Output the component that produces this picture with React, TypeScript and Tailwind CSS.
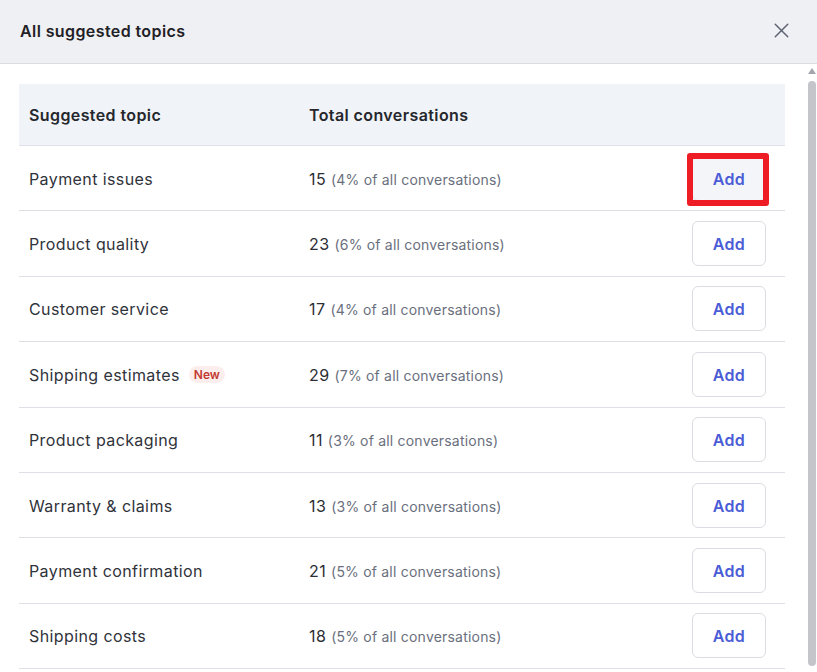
import { X } from 'lucide-react';

const rows = [
  { topic: 'Payment issues', count: 15, pct: 4 },
  { topic: 'Product quality', count: 23, pct: 6 },
  { topic: 'Customer service', count: 17, pct: 4 },
  { topic: 'Shipping estimates', count: 29, pct: 7, isNew: true },
  { topic: 'Product packaging', count: 11, pct: 3 },
  { topic: 'Warranty & claims', count: 13, pct: 3 },
  { topic: 'Payment confirmation', count: 21, pct: 5 },
  { topic: 'Shipping costs', count: 18, pct: 5 },
];

export default function App() {
  return (
    <div
      className="w-[817px] h-[672px] overflow-hidden bg-white flex flex-col text-[#2f3239]"
      style={{ fontFamily: 'Inter, "Noto Sans", sans-serif' }}
    >
      {/* Header */}
      <div className="h-[64px] shrink-0 bg-[#eff0f3] border-b border-[#dcdde1] flex items-center justify-between pl-[20px] pr-[23px]">
        <h2 className="text-[16px] font-semibold tracking-[0.4px] text-[#1f2126] -mt-[2px]">All suggested topics</h2>
        <X size={25} strokeWidth={1.4} className="text-[#5f6472] -mt-[2px]" />
      </div>

      {/* Body */}
      <div className="flex-1 flex min-h-0">
        <div className="flex-1 pt-[20px] pl-[19px] pr-[22px]">
          <div className="w-[766px]">
            {/* Table header */}
            <div className="h-[62px] bg-[#f0f3f8] border-b border-[#dfe0e5] flex items-center text-[16px] font-semibold tracking-[0.4px] text-[#25272c]">
              <div className="w-[290px] pl-[10px]">Suggested topic</div>
              <div className="flex-1">Total conversations</div>
            </div>

            {rows.map((r, i) => (
              <div
                key={r.topic}
                className="relative h-[65.4px] border-b border-[#dfe0e5] flex items-center"
              >
                <div className="w-[290px] pl-[10px] flex items-center gap-[9px] text-[16px] tracking-[0.4px] text-[#30333a] pt-[1px]">
                  <span>{r.topic}</span>
                  {r.isNew && (
                    <span className="px-[5px] h-[17px] leading-[17px] rounded-full bg-[#fdeeee] text-[#c23a31] text-[12px] font-semibold tracking-normal">
                      New
                    </span>
                  )}
                </div>
                <div className="flex-1 flex items-baseline gap-[5px] pt-[1px]">
                  <span className="text-[16px] tracking-[0.4px] text-[#2c2e34]">{r.count}</span>
                  <span className="text-[14px] tracking-[0.2px] text-[#6a6f7d]">({r.pct}% of all conversations)</span>
                </div>
                <div className="pr-[19px]">
                  <button
                    className={`w-[74px] h-[45px] rounded-[6px] border border-[#dcdde2] text-[16px] font-semibold tracking-[0.3px] text-[#4a5cd6] pt-[1px] ${
                      i === 0 ? 'bg-[#f4f5f9]' : 'bg-white'
                    }`}
                  >
                    Add
                  </button>
                </div>
                {i === 0 && (
                  <div className="absolute left-[668px] top-[7px] w-[82px] h-[53px] border-[6px] border-[#ee1c25] rounded-[3px] pointer-events-none" />
                )}
              </div>
            ))}
          </div>
        </div>

        {/* Scrollbar */}
        <div className="w-[10px] shrink-0 flex flex-col items-center pt-[4px] mr-[1px]">
          <div className="w-0 h-0 border-l-[4px] border-r-[4px] border-b-[6px] border-l-transparent border-r-transparent border-b-[#a3a6ad]" />
          <div className="mt-[7px] w-[8px] h-[585px] rounded-full bg-[#c3c5cb]" />
        </div>
      </div>
    </div>
  );
}
